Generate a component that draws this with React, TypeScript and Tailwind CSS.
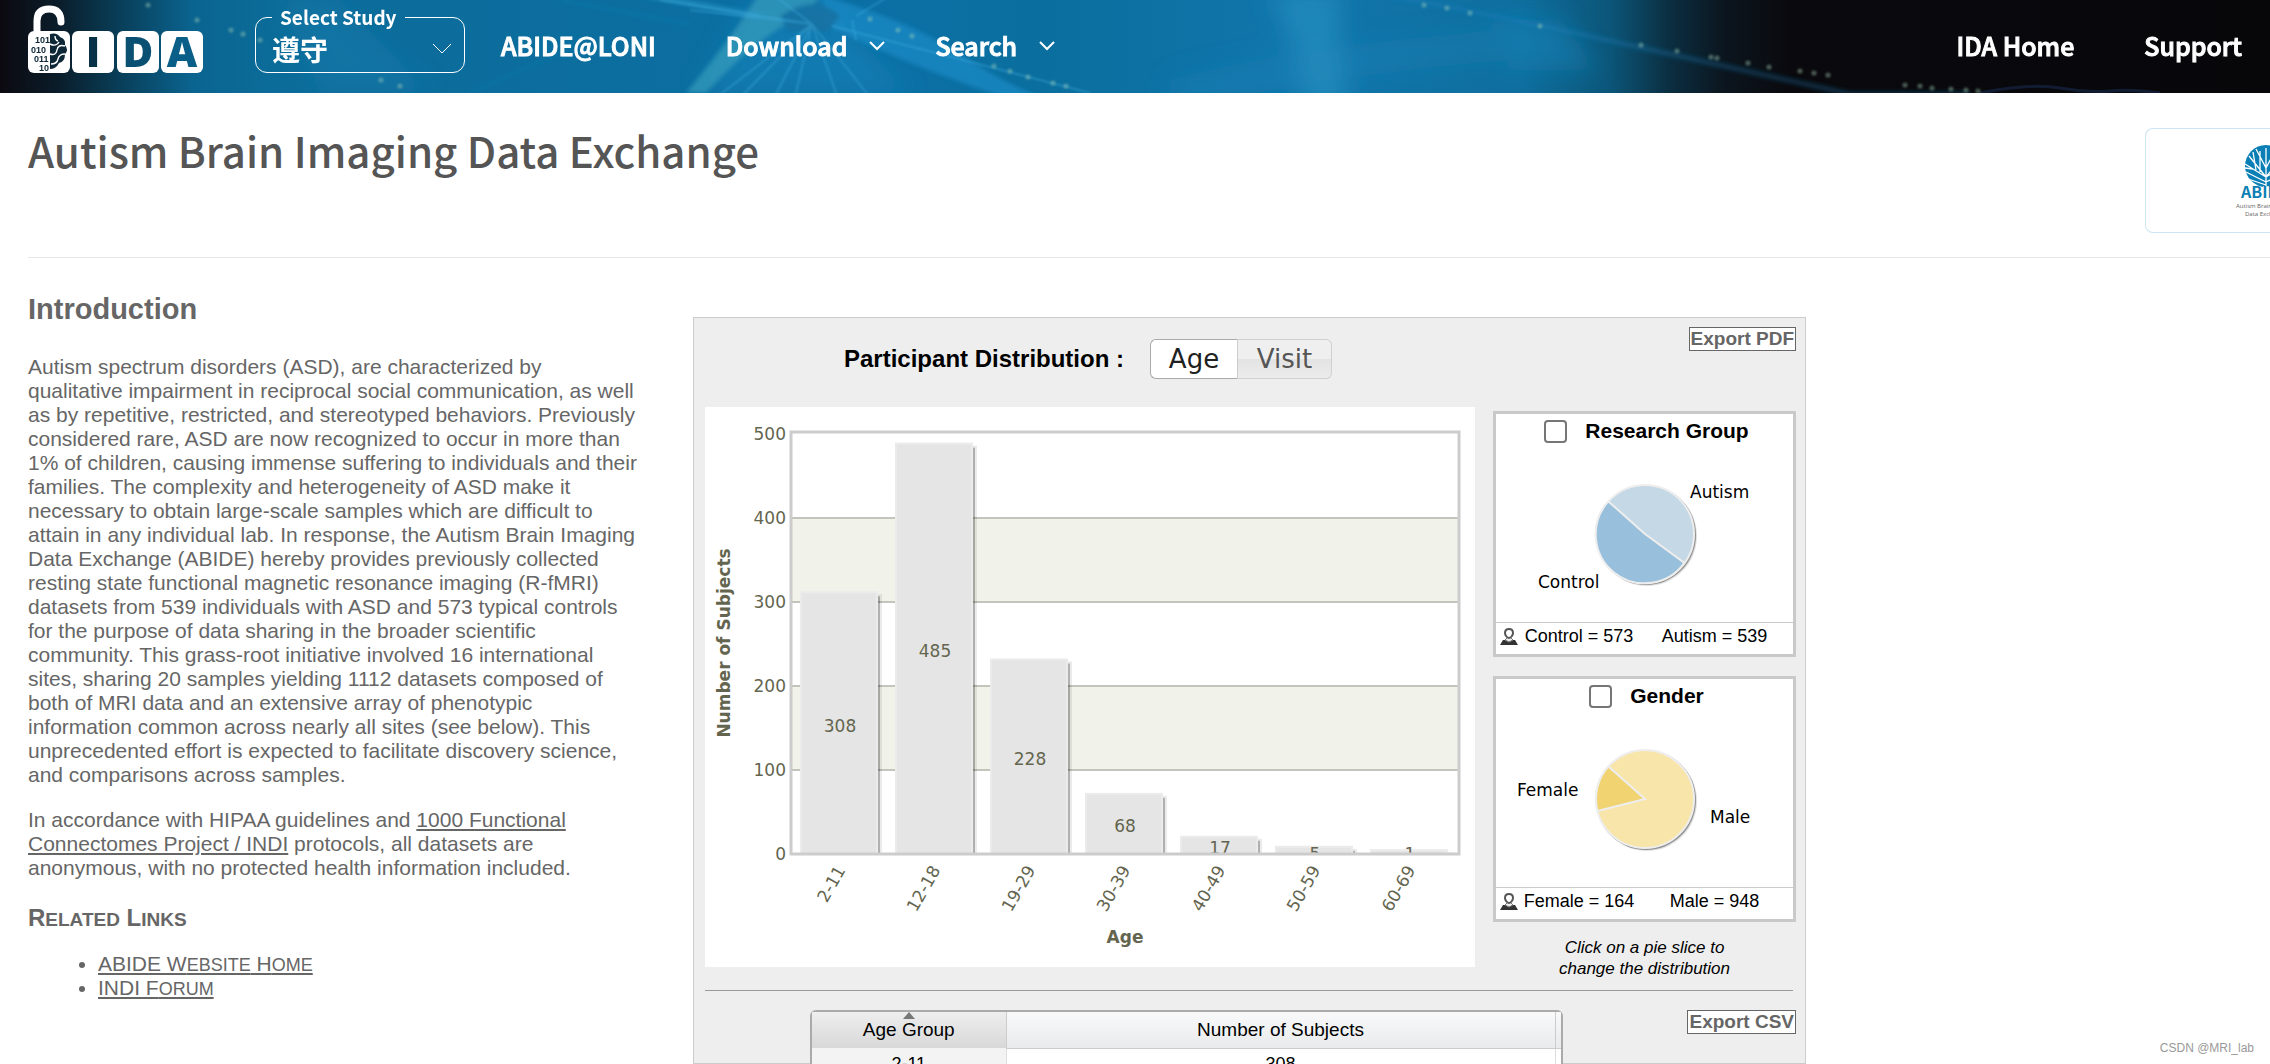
import { useState } from "react";
import type { ReactNode } from "react";

const ui = "font-['Noto_Sans_CJK_SC',sans-serif]";
const arial = "font-['Liberation_Sans',Arial,sans-serif]";
const chartFont = "font-['DejaVu_Sans',sans-serif]";

const spokes = [
  [740, -30], [690, 10], [700, 110], [728, 110], [768, 110], [792, 110], [842, 110], [880, 110], [660, 0],
];
const beads = [
  [1424, 5], [1447, 8], [1470, 13], [1540, 26], [1641, 45], [1677, 51], [1711, 57], [1717, 58], [1748, 63],
  [1769, 67], [1800, 71], [1814, 73], [1828, 75], [1905, 85], [1920, 86], [1932, 88], [1951, 89], [1966, 90],
  [1978, 91], [148, 5], [197, 20], [231, 30], [243, 34], [260, 40], [381, 80], [400, 86], [870, 19],
  [898, 30], [912, 36], [994, 66], [1010, 71], [1028, 77], [1053, 83], [1066, 86],
];

function HeaderArt() {
  return (
    <svg className="absolute inset-0 h-full w-full" viewBox="0 0 2270 93" preserveAspectRatio="none" aria-hidden="true">
      <defs>
        <linearGradient id="base" x1="0" x2="1" y1="0" y2="0">
          <stop offset="0" stopColor="#0c0a10" />
          <stop offset=".025" stopColor="#0a1c29" />
          <stop offset=".05" stopColor="#093b54" />
          <stop offset=".085" stopColor="#0a6490" />
          <stop offset=".12" stopColor="#0c6c99" />
          <stop offset=".4" stopColor="#0c70a5" />
          <stop offset=".46" stopColor="#0a6e9e" />
          <stop offset=".57" stopColor="#1276ac" />
          <stop offset=".67" stopColor="#0f6f9f" />
          <stop offset=".71" stopColor="#0c5578" />
          <stop offset=".735" stopColor="#0b2f42" />
          <stop offset=".76" stopColor="#0b151e" />
          <stop offset=".79" stopColor="#0a090d" />
          <stop offset="1" stopColor="#07070a" />
        </linearGradient>
        <filter id="soft" x="-50%" y="-50%" width="200%" height="200%"><feGaussianBlur stdDeviation="12" /></filter>
        <filter id="softer" x="-50%" y="-50%" width="200%" height="200%"><feGaussianBlur stdDeviation="2" /></filter>
        <filter id="bead" x="-50%" y="-50%" width="200%" height="200%"><feGaussianBlur stdDeviation="1" /></filter>
      </defs>
      <rect width="2270" height="93" fill="url(#base)" />
      <g filter="url(#soft)">
        <path d="M280 0h60l90 93h-110z" fill="#1480b5" opacity=".35" />
        <path d="M1270-10l25 60 10 60h45l-10-60 0-60z" fill="#2b97c5" opacity=".55" />
        <path d="M1170 80q110-30 330-50v30q-200 20-330 50z" fill="#2689bd" opacity=".3" />
        <path d="M700 93l50-93h70l90 93z" fill="#2190cc" opacity=".35" />
        <path d="M1490 20h70l40 50h-90z" fill="#1c86ba" opacity=".5" />
      </g>
      <g filter="url(#softer)">
        <path d="M758-5q-20 35-72 98h20q45-50 90-75l30-25z" fill="#3aa0bd" opacity=".65" />
        <path d="M820-5q90 25 150 65t125 53h-40Q940 80 832 28z" fill="#1e93d2" opacity=".55" />
        <path d="M780 16q35-24 60 0l-12 16h-40z" fill="#1673a4" />
        <path d="M640-6l120 22" stroke="#2f9fd0" strokeWidth="5" opacity=".6" />
        <path d="M560 0l130 24M470 93l90-40" stroke="#2688c0" strokeWidth="3" opacity=".25" />
        <path d="M1380-6q90 16 200 40t270 60h120" fill="none" stroke="#1685c4" strokeWidth="5" opacity=".3" />
      </g>
      <g stroke="#43b0e2" strokeWidth="2" opacity=".4" filter="url(#bead)">
        {spokes.map(([x, y], i) => <path key={i} d={`M812 24L${x} ${y}`} />)}
        <path d="M832 26L1090 93M856 16l30-18M852 20l4 20" fill="none" />
      </g>
      <path d="M1980 93q50-10 80-5t50 3 50 2" fill="none" stroke="#152545" strokeWidth="3" opacity=".7" />
      <g fill="#a9d5ba" filter="url(#bead)" opacity=".4">
        {beads.map(([x, y], i) => <circle key={i} cx={x} cy={y} r="2.6" />)}
      </g>
    </svg>
  );
}

function IdaLogo() {
  return (
    <svg width="180" height="74" viewBox="0 0 180 74" role="img" aria-label="IDA">
      <path d="M9 33V21Q9 9 21 9Q33 9 33 22" fill="none" stroke="#fff" strokeWidth="7" strokeLinecap="round" />
      <rect x="0" y="31" width="42" height="42" rx="6" fill="#fff" />
      <rect x="44" y="31" width="42" height="42" rx="6" fill="#fff" />
      <rect x="89" y="31" width="42" height="42" rx="6" fill="#fff" />
      <rect x="133" y="31" width="42" height="42" rx="6" fill="#fff" />
      <g className="font-['Liberation_Sans',Arial,sans-serif] font-bold" fill="#0d2736" fontSize="9">
        <text x="7" y="43">101</text>
        <text x="3" y="53">010</text>
        <text x="6" y="62">011</text>
        <text x="11" y="71">10</text>
      </g>
      <path d="M22 34q7-2 10 3 6 2 5 8 4 5 0 9 0 8-6 9-3 6-9 6z" fill="#0d2736" />
      <path d="M22 44q6 3 9-2M37 46q-7-2-8 4t-7 4M37 54q-6 0-7 5t-7 5M27 36q0 4 3 5" fill="none" stroke="#fff" strokeWidth="1.4" />
      <g className="font-['Open_Sans',sans-serif] font-extrabold" fontSize="42" textAnchor="middle">
        <text x="65" y="67" fill="#093249">I</text>
        <text x="110" y="67" fill="#095073">D</text>
        <text x="154" y="67" fill="#0a5f88">A</text>
      </g>
    </svg>
  );
}

function Chevron({ w, h, thin }: { w: number; h: number; thin?: boolean }) {
  return (
    <svg width={w} height={h} viewBox={`0 0 ${w} ${h}`} fill="none" stroke="currentColor" strokeWidth={thin ? 1 : 2} aria-hidden="true">
      <path d={`M1 1L${w / 2} ${h - 2}L${w - 1} 1`} />
    </svg>
  );
}

function Header() {
  return (
    <header className={`relative flex h-[93px] shrink-0 overflow-hidden bg-[#0a090d] pr-7 pl-7 text-white ${ui}`}>
      <HeaderArt />
      <div className="relative flex w-full items-start">
        <a href="#home" className="w-[227px] shrink-0"><IdaLogo /></a>
        <fieldset className="mt-[3px] h-[70px] w-[210px] shrink-0 rounded-xl border border-white px-4 font-bold">
          <legend className="px-2 text-[19px] leading-[28px]"><label htmlFor="study">Select Study</label></legend>
          <div className="relative flex items-center">
            <select id="study" className="w-full appearance-none bg-transparent text-[28px] leading-9">
              <option>遵守</option>
            </select>
            <span className="pointer-events-none absolute -right-1"><Chevron w={20} h={12} thin /></span>
          </div>
        </fieldset>
        <nav className="flex h-[91px] grow items-center text-[25px] font-medium [-webkit-text-stroke:1px]">
          <a href="#abide" className="ml-9">ABIDE@LONI</a>
          <button className="ml-[70px] flex items-center gap-[22px]">Download <Chevron w={16} h={10} /></button>
          <button className="ml-[50px] flex items-center gap-[22px]">Search <Chevron w={16} h={10} /></button>
          <a href="#ida" className="ml-auto">IDA Home</a>
          <a href="#support" className="ml-[70px]">Support</a>
        </nav>
      </div>
    </header>
  );
}

function AbideLogo() {
  return (
    <svg width="90" height="76" viewBox="0 0 90 76" role="img" aria-label="ABIDE">
      <ellipse cx="32" cy="21" rx="21" ry="21" fill="#0a7fb5" />
      <g stroke="#fff" strokeWidth="1.3" fill="none">
        <path d="M32 3v40M29 42h6M32 37L12 27M32 40L14 34M32 32L11 19M32 32L15 11M32 23L22 4M32 37l20-10M32 32l21-13M32 32l17-21M32 23l10-19M22 25l-3-18M19 24l-8-1M26 27V6M42 25l3-18M45 24l8-1" />
      </g>
      <text x="7" y="53" fontSize="16" fill="#0a7fb5" className="font-['Noto_Sans_CJK_SC',sans-serif] font-bold">ABIDE</text>
      <text x="2" y="63" fontSize="6" fill="#666" className="font-['Open_Sans',sans-serif]">Autism Brain Imaging</text>
      <text x="11" y="71" fontSize="6" fill="#666" className="font-['Open_Sans',sans-serif]">Data Exchange</text>
    </svg>
  );
}

const bars = [
  { label: "2-11", n: 308 }, { label: "12-18", n: 485 }, { label: "19-29", n: 228 }, { label: "30-39", n: 68 },
  { label: "40-49", n: 17 }, { label: "50-59", n: 5 }, { label: "60-69", n: 1 },
];

function BarChart() {
  return (
    <svg viewBox="0 0 770 560" className={`block w-full bg-white text-[17px] ${chartFont}`} role="img" aria-label="Number of subjects by age">
      <rect x="87" y="111" width="667" height="84" fill="#f1f2ea" />
      <rect x="87" y="279" width="667" height="84" fill="#f1f2ea" />
      {[111, 195, 279, 363].map((y) => <path key={y} d={`M87 ${y}H754`} stroke="#c3c4bb" strokeWidth="2" />)}
      <clipPath id="plot"><rect x="87" y="26" width="667" height="421" /></clipPath>
      <g clipPath="url(#plot)">
        {bars.map((b, i) => {
          const x = 96 + i * 95;
          const y = 447 - b.n * 0.84;
          return (
            <g key={b.label}>
              <rect x={x + 2} y={y - 1} width="79" height="450" fill="#000" opacity=".08" />
              <rect x={x + 3} y={y + 1} width="76" height="450" fill="#000" opacity=".25" />
              <rect x={x - 1} y={y - 4} width="78" height="460" fill="#ebebeb" />
              <rect x={x + 1} y={y - 2} width="74" height="460" fill="#e5e5e5" />
              <text x={x + 39} y={b.n > 10 ? (447 + y) / 2 + 7 : 453} textAnchor="middle" fill="#64654f">{b.n}</text>
            </g>
          );
        })}
      </g>
      <rect x="86" y="25" width="668" height="422" fill="none" stroke="#ccc" strokeWidth="3" />
      <g fill="#64654f">
        {[500, 400, 300, 200, 100, 0].map((v, i) => <text key={v} x="81" y={33 + i * 84} textAnchor="end">{v}</text>)}
        {bars.map((b, i) => (
          <text key={b.label} transform={`translate(${141 + i * 95} 463) rotate(-60)`} textAnchor="end">{b.label}</text>
        ))}
        <text x="420" y="536" textAnchor="middle" className="font-bold">Age</text>
        <text transform="translate(25 236) rotate(-90)" textAnchor="middle" className="font-bold">Number of Subjects</text>
      </g>
    </svg>
  );
}

function Person() {
  return (
    <svg width="18" height="18" viewBox="0 0 18 18" fill="none" aria-hidden="true">
      <path d="M0 18l3-5h12l3 5z" fill="#333" />
      <path d="M5 13l4-4 4 4-4 2z" fill="#eee" stroke="#777" />
      <path d="M9 2c3 0 4 2 4 4s-2 5-4 5-4-3-4-5 1-4 4-4z" fill="#fff" stroke="#555" strokeWidth="2" />
    </svg>
  );
}

function PieCard({ id, title, left, right, children }: { id: string; title: string; left: string; right: string; children: ReactNode }) {
  return (
    <section className={`flex h-[246px] flex-col border-[3px] border-[#c9c9c9] bg-white text-black ${arial}`}>
      <label htmlFor={id} className="flex h-9 items-center justify-center gap-[18px] pb-[2px] pl-1 text-[21px] font-bold">
        <input id={id} type="checkbox" className="h-[23px] w-[23px] appearance-none rounded-[4px] border-2 border-[#767676] bg-white" />
        {title}
      </label>
      <svg viewBox="0 0 297 172" className={`w-full grow text-[17px] ${chartFont}`}>{children}</svg>
      <p className="flex h-8 items-center border-t border-[#ccc] pb-[6px] pl-1 text-lg leading-6">
        <Person />
        <span className="w-[122px] text-center">{left}</span>
        <span className="w-[149px] text-center">{right}</span>
      </p>
    </section>
  );
}

function Pie({ a, b, slice, cx, cy }: { a: string; b: string; slice: string; cx: number; cy: number }) {
  return (
    <>
      <circle cx={cx + 2} cy={cy + 2} r="50" fill="#000" opacity=".12" />
      <circle cx={cx + 1} cy={cy + 1} r="50" fill="#000" opacity=".35" />
      <circle cx={cx} cy={cy} r="49" fill={a} stroke="#eee" strokeWidth="2" />
      <path d={slice} fill={b} stroke="#eee" strokeWidth="2" />
    </>
  );
}

const exportButton =
  "absolute right-[-3px] h-6 whitespace-nowrap border border-[#666] bg-white px-px text-[19px] leading-5 font-bold text-[#666]";

function Panel() {
  const [tab, setTab] = useState("Age");
  return (
    <section className={`w-[1113px] shrink-0 self-stretch border border-[#ccc] bg-[#eee] pr-3 pl-[11px] text-black ${arial}`}>
      <div className="relative flex h-[89px] items-center pb-2 pl-[139px]">
        <h2 className="text-2xl font-bold">Participant Distribution :</h2>
        <div className={`ml-[26px] flex h-10 text-[26px] ${chartFont}`}>
          {["Age", "Visit"].map((t) => (
            <button
              key={t}
              onClick={() => setTab(t)}
              className={
                t === tab
                  ? "w-[88px] rounded-l-md border border-[#aaa] bg-white text-[#212121] first:border-r-[#ccc]"
                  : "w-[94px] rounded-r-md border border-l-0 border-[#d0d0d0] bg-linear-to-b from-[#efefef] from-50% via-[#e3e3e3] via-50% to-[#ececec] text-[#555]"
              }
            >
              {t}
            </button>
          ))}
        </div>
        <button className={`top-[9px] ${exportButton}`}>Export PDF</button>
      </div>
      <div className="flex items-start">
        <div className="w-[770px] shrink-0"><BarChart /></div>
        <div className="mt-1 -mr-[3px] ml-[18px] grow">
          <PieCard id="group" title="Research Group" left="Control = 573" right="Autism = 539">
            <Pie cx={149} cy={84} a="#c5d8e6" b="#98bfdb" slice="M149 84L112.4 51.4A49 49 0 1 0 188.5 112.9Z" />
            <text x="194" y="48">Autism</text>
            <text x="42" y="138">Control</text>
          </PieCard>
          <div className="h-[19px]" />
          <PieCard id="gender" title="Gender" left="Female = 164" right="Male = 948">
            <Pie cx={149} cy={84} a="#f8e5aa" b="#f1d372" slice="M149 84L112.4 51.4A49 49 0 0 0 101.5 96Z" />
            <text x="21" y="81">Female</text>
            <text x="214" y="108">Male</text>
          </PieCard>
          <p className="mt-[15px] text-center text-[17px] leading-[21px] italic">Click on a pie slice to<br />change the distribution</p>
        </div>
      </div>
      <div className="relative mt-[11px] border-t border-[#999] pt-[19px]">
        <div className="ml-[105px] w-[753px] rounded-t-md border-2 border-[#aaa]">
          <table className="w-full border-collapse text-center text-lg">
            <thead className="text-[19px]">
              <tr className="h-9">
                <th className="relative w-[194px] border-r border-[#ccc] bg-linear-to-b from-[#eee] to-[#d8d8d8] font-normal">
                  <svg className="absolute top-0 left-[91px]" width="12" height="7" viewBox="0 0 12 7" aria-hidden="true"><path d="M6 0l6 7H0z" fill="#777" /></svg>
                  Age Group
                </th>
                <th className="border-b border-[#ccc] bg-linear-to-b from-[#f9f9fa] to-[#e8eaec] font-normal">Number of Subjects</th>
                <th className="w-[6px] border-b border-l border-[#ccc] bg-linear-to-b from-[#f9f9fa] to-[#e8eaec]" />
              </tr>
            </thead>
            <tbody>
              {bars.map((b) => (
                <tr key={b.label} className="h-8 bg-white">
                  <td className="border-r border-[#ddd] bg-[#f3f3f3]">{b.label}</td>
                  <td>{b.n}</td>
                  <td className="border-l border-[#ddd]" />
                </tr>
              ))}
            </tbody>
          </table>
        </div>
        <button className={`top-[19px] ${exportButton}`}>Export CSV</button>
      </div>
    </section>
  );
}

export default function App() {
  return (
    <div className={`relative flex h-screen flex-col overflow-hidden bg-white text-[#666] ${arial}`}>
      <Header />
      <div className="ml-7 flex h-[165px] shrink-0 items-start justify-between overflow-hidden border-b border-[#e8e8e8]">
        <h1 className={`mt-[26px] text-[42px] leading-[62px] font-medium text-[#555] ${ui}`}>Autism Brain Imaging Data Exchange</h1>
        <div className="mt-[35px] h-[105px] w-[125px] shrink-0 overflow-hidden rounded-l-lg border border-r-0 border-[#cbe5f3]">
          <div className="mt-4 ml-[88px] w-[90px]"><AbideLogo /></div>
        </div>
      </div>
      <main className="ml-7 flex min-h-0 grow items-start">
        <article className="w-[665px] shrink-0 pt-[33px] pr-[53px] text-[21px] leading-6">
          <h2 className="text-[29px] leading-[36px] font-bold">Introduction</h2>
          <p className="mt-7">
            Autism spectrum disorders (ASD), are characterized by qualitative impairment in reciprocal social communication, as well as by repetitive, restricted, and stereotyped behaviors. Previously considered rare, ASD are now recognized to occur in more than 1% of children, causing immense suffering to individuals and their families. The complexity and heterogeneity of ASD make it necessary to obtain large-scale samples which are difficult to attain in any individual lab. In response, the Autism Brain Imaging Data Exchange (ABIDE) hereby provides previously collected resting state functional magnetic resonance imaging (R-fMRI) datasets from 539 individuals with ASD and 573 typical controls for the purpose of data sharing in the broader scientific community. This grass-root initiative involved 16 international sites, sharing 20 samples yielding 1112 datasets composed of both of MRI data and an extensive array of phenotypic information common across nearly all sites (see below). This unprecedented effort is expected to facilitate discovery science, and comparisons across samples.
          </p>
          <p className="mt-[21px]">
            In accordance with HIPAA guidelines and <a href="#indi" className="underline">1000 Functional Connectomes Project / INDI</a> protocols, all datasets are anonymous, with no protected health information included.
          </p>
          <h3 className="mt-6 text-2xl leading-7 font-bold">
            R<span className="text-[19px] leading-4 uppercase">elated</span> L<span className="text-[19px] leading-4 uppercase">inks</span>
          </h3>
          <ul className="mt-5 list-disc pl-[70px]">
            <li>
              <a href="#site" className="underline">ABIDE W<span className="text-lg leading-4 uppercase">ebsite</span> H<span className="text-lg leading-4 uppercase">ome</span></a>
            </li>
            <li>
              <a href="#forum" className="underline">INDI F<span className="text-lg leading-4 uppercase">orum</span></a>
            </li>
          </ul>
        </article>
        <div className="flex h-full pt-[59px]"><Panel /></div>
      </main>
      <p className="absolute right-4 bottom-2 text-xs leading-4 text-[#999]">CSDN @MRI_lab</p>
    </div>
  );
}
